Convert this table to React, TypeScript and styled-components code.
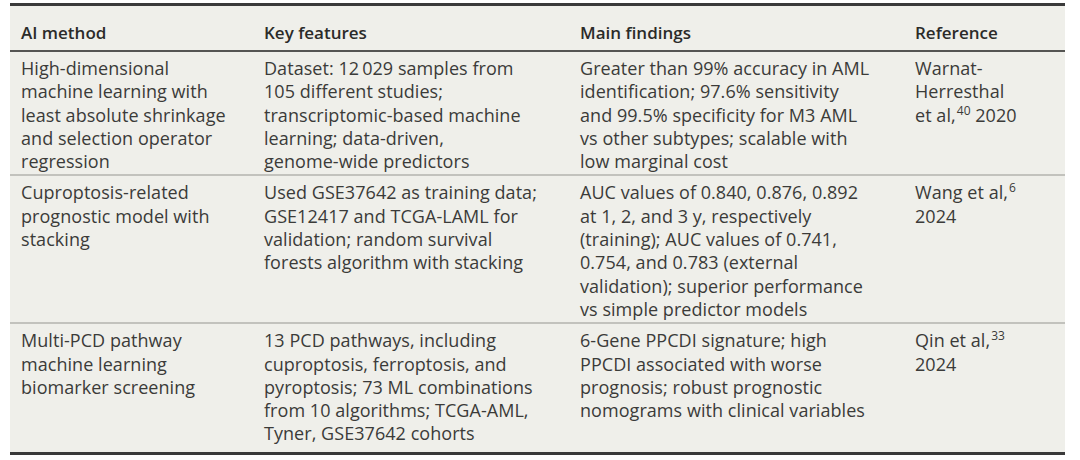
import React from "react";
import styled, { createGlobalStyle } from "styled-components";

type Cell = React.ReactNode[];

interface RowType {
	method: Cell;
	features: Cell;
	findings: Cell;
	reference: Cell;
}

const Sup = styled.sup`
	font-size: 12px;
	line-height: 0;
	vertical-align: 0;
	position: relative;
	top: -7px;
	margin-left: 1px;
`;

const rows: RowType[] = [
	{
		method: ["High-dimensional", "machine learning with", "least absolute shrinkage", "and selection operator", "regression"],
		features: ["Dataset: 12\u2009029 samples from", "105 different studies;", "transcriptomic-based machine", "learning; data-driven,", "genome-wide predictors"],
		findings: ["Greater than 99% accuracy in AML", "identification; 97.6% sensitivity", "and 99.5% specificity for M3 AML", "vs other subtypes; scalable with", "low marginal cost"],
		reference: ["Warnat-", "Herresthal", <>et al,<Sup>40</Sup> 2020</>],
	},
	{
		method: ["Cuproptosis-related", "prognostic model with", "stacking"],
		features: ["Used GSE37642 as training data;", "GSE12417 and TCGA-LAML for", "validation; random survival", "forests algorithm with stacking"],
		findings: ["AUC values of 0.840, 0.876, 0.892", "at 1, 2, and 3 y, respectively", "(training); AUC values of 0.741,", "0.754, and 0.783 (external", "validation); superior performance", "vs simple predictor models"],
		reference: [<>Wang et al,<Sup>6</Sup></>, "2024"],
	},
	{
		method: ["Multi-PCD pathway", "machine learning", "biomarker screening"],
		features: ["13 PCD pathways, including", "cuproptosis, ferroptosis, and", "pyroptosis; 73 ML combinations", "from 10 algorithms; TCGA-AML,", "Tyner, GSE37642 cohorts"],
		findings: ["6-Gene PPCDI signature; high", "PPCDI associated with worse", "prognosis; robust prognostic", "nomograms with clinical variables"],
		reference: [<>Qin et al,<Sup>33</Sup></>, "2024"],
	},
];

const Lines = ({ lines }: { lines: Cell }) => (
	<>
		{lines.map((l, i) => (
			<Line key={i}>{l}</Line>
		))}
	</>
);

const App = () => {
	return (
		<>
			<GlobalStyle />
			<Page>
				<Table>
					<HeaderRow>
						<HeadCell>AI method</HeadCell>
						<HeadCell>Key features</HeadCell>
						<HeadCell>Main findings</HeadCell>
						<HeadCell>Reference</HeadCell>
					</HeaderRow>
					{rows.map((r, i) => (
						<BodyRow key={i} isLast={i === rows.length - 1}>
							<BodyCell><Lines lines={r.method} /></BodyCell>
							<BodyCell><Lines lines={r.features} /></BodyCell>
							<BodyCell><Lines lines={r.findings} /></BodyCell>
							<BodyCell><Lines lines={r.reference} /></BodyCell>
						</BodyRow>
					))}
				</Table>
			</Page>
		</>
	);
};

export default App;

const GlobalStyle = createGlobalStyle`
	html, body {
		margin: 0;
		padding: 0;
		background: #ffffff;
	}
	body {
		font-family: "Open Sans", "Noto Sans", sans-serif;
	}
`;

const Page = styled.div`
	width: 1080px;
	height: 460px;
	padding: 3px 15px 0 10px;
	box-sizing: border-box;
	background: #ffffff;
`;

const Table = styled.div`
	background: #efefea;
	border-top: 3px solid #3a3a3a;
	border-bottom: 3px solid #3a3a3a;
	color: #3b3b39;
`;

const gridCols = `
	display: grid;
	grid-template-columns: 243px 316px 335px 1fr;
	padding-left: 11px;
`;

const HeaderRow = styled.div`
	${gridCols}
	padding-top: 15px;
	padding-bottom: 5px;
	border-bottom: 2px solid #555553;
`;

const HeadCell = styled.div`
	font-size: 17px;
	font-weight: 600;
	line-height: 24px;
	color: #2b2b29;
	white-space: nowrap;
`;

const BodyRow = styled.div<{ isLast: boolean }>`
	${gridCols}
	padding-top: 5px;
	padding-bottom: ${(p) => (p.isLast ? "6px" : "1px")};
	border-bottom: ${(p) => (p.isLast ? "none" : "2px solid #c2c2bd")};
`;

const BodyCell = styled.div`
	display: flex;
	flex-direction: column;
	font-size: 18px;
	line-height: 23.3px;
	letter-spacing: 0.05px;
`;

const Line = styled.span`
	white-space: nowrap;
`;
